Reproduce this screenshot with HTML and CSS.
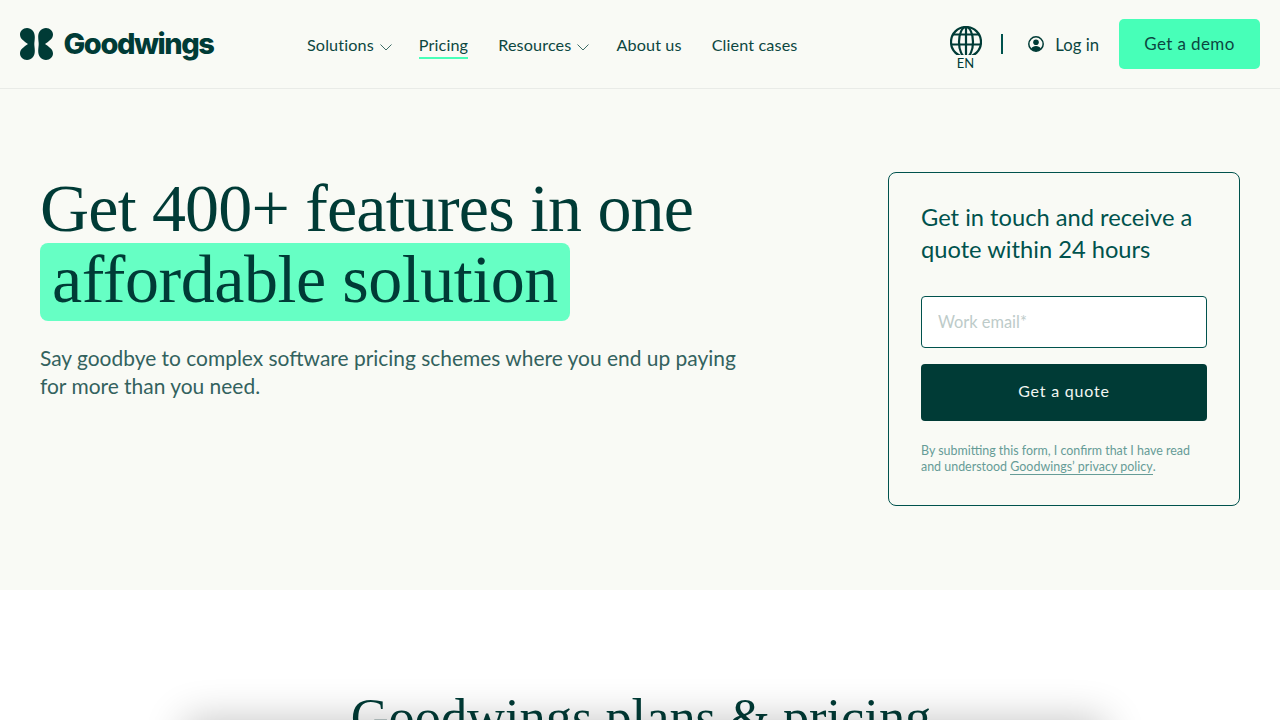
FILE: index.html
```html
<!DOCTYPE html>
<html lang="en">
<head>
<meta charset="utf-8">
<title>Goodwings pricing</title>
<link rel="stylesheet" href="styles.css">
</head>
<body>
<header class="site-header">
  <a class="brand" href="#">
    <svg class="brand-mark" viewBox="0 0 33 32" width="33" height="32" aria-hidden="true">
      <path d="M7 0C11.500 0 14.800 3.500 14.800 9C14.800 12 14.300 14 14.300 16C14.300 18 14.800 20 14.800 23C14.800 28.500 11.500 32 7 32C3 32 0 29 0 25.500C0 21 4 19 8 16C4 13 0 11 0 6.500C0 3 3 0 7 0Z"/>
      <path d="M26 0C21.500 0 18.200 3.500 18.200 9C18.200 12 18.700 14 18.700 16C18.700 18 18.200 20 18.200 23C18.200 28.500 21.500 32 26 32C30 32 33 29 33 25.500C33 21 29 19 25 16C29 13 33 11 33 6.500C33 3 30 0 26 0Z"/>
    </svg>
    <span class="brand-name">Goodwings</span>
  </a>
  <nav class="main-nav">
    <a class="nav-link" href="#">Solutions<svg class="chev" viewBox="0 0 12 7" width="12" height="7"><path d="M.5.500 6 6 11.500.500"/></svg></a>
    <a class="nav-link nav-current" href="#">Pricing</a>
    <a class="nav-link" href="#">Resources<svg class="chev" viewBox="0 0 12 7" width="12" height="7"><path d="M.5.500 6 6 11.500.500"/></svg></a>
    <a class="nav-link" href="#">About us</a>
    <a class="nav-link" href="#">Client cases</a>
  </nav>
  <div class="header-actions">
    <div class="lang">
      <svg class="globe" viewBox="0 0 32 29" width="32" height="29" aria-hidden="true">
        <circle cx="16" cy="16" r="15"/>
        <ellipse cx="16" cy="16" rx="7" ry="15"/>
        <path d="M16 1V29M3.500 8.500H28.500M1 18.500H31"/>
      </svg>
      <span class="lang-code">EN</span>
    </div>
    <span class="divider"></span>
    <a class="login" href="#">
      <svg class="user" viewBox="0 0 16 16" width="16" height="16" aria-hidden="true">
        <circle class="user-ring" cx="8" cy="8" r="7.200"/>
        <circle class="user-fill" cx="8" cy="6.200" r="2.800"/>
        <path class="user-fill" d="M3 12.800C4 10.800 6 10 8 10C10 10 12 10.800 13 12.800C11.500 14.400 9.800 15.200 8 15.200C6.200 15.200 4.500 14.400 3 12.800Z"/>
      </svg>
      <span>Log in</span>
    </a>
    <a class="demo-btn" href="#">Get a demo</a>
  </div>
</header>
<section class="hero">
  <div class="hero-copy">
    <h1 class="hero-title"><span class="title-line">Get 400+ features in one</span> <span class="mark">affordable solution</span></h1>
    <p class="hero-sub">Say goodbye to complex software pricing schemes where you end up paying for more than you need.</p>
  </div>
  <form class="quote-card">
    <h2 class="quote-title">Get in touch and receive a quote within 24 hours</h2>
    <input class="email" type="text" placeholder="Work email*">
    <button class="quote-btn" type="button">Get a quote</button>
    <p class="legal">By submitting this form, I confirm that I have read and understood <a href="#">Goodwings’ privacy policy</a>.</p>
  </form>
</section>
<section class="plans">
  <h2 class="plans-title">Goodwings plans &amp; pricing</h2>
  <div class="plans-table"></div>
</section>
</body>
</html>
```
FILE: styles.css
```css
* { box-sizing: border-box; }
html, body { margin: 0; height: 720px; overflow: hidden; background: #fff; }
body { font-family: "Lato", "Open Sans", sans-serif; color: #003b36; }
a { color: inherit; text-decoration: none; }

.site-header {
  height: 89px;
  display: flex;
  align-items: center;
  background: #f9faf5;
  border-bottom: 1px solid #e9ebe7;
  padding: 0 20px;
}
.brand { display: flex; align-items: center; gap: 10.500px; width: 287px; flex: none; }
.brand-mark { fill: #003b36; flex: none; }
.brand-name { font-family: "Inter", "Lato", sans-serif; font-size: 29px; font-weight: 800; letter-spacing: -1.450px; line-height: 32px; }

.main-nav { display: flex; gap: 30px; font-size: 16.200px; line-height: 24px; padding-top: 2px; }
.nav-link { display: flex; align-items: center; color: #0c4741; letter-spacing: .13px; }
.nav-current { box-shadow: 0 2px 0 #47ffb8; height: 24px; }
.chev { margin: 4px -3px 0 6px; fill: none; stroke: #0c4741; stroke-width: .8; }

.header-actions { margin-left: auto; display: flex; align-items: center; }
.lang { display: flex; flex-direction: column; align-items: center; width: 32px; margin-top: 8px; }
.globe { fill: none; stroke: #003b36; stroke-width: 2.200; }
.lang-code { font-size: 13px; line-height: 14px; margin: 1px 2px 0 0; }
.divider { width: 2px; height: 20px; background: #00524d; margin: 0 25px 1px 19px; }
.login { display: flex; align-items: center; gap: 11px; font-size: 16.700px; margin-right: 20px; padding-top: 2px; color: #0c4741; }
.user { flex: none; margin-top: -3px; }
.user-ring { fill: none; stroke: #003b36; stroke-width: 1.500; }
.user-fill { fill: #003b36; }
.demo-btn {
  width: 141px;
  height: 50px;
  display: flex;
  align-items: center;
  justify-content: center;
  background: #47ffb8;
  border-radius: 5px;
  font-size: 17px;
  letter-spacing: .4px;
  padding-bottom: 2px;
  color: #0c4741;
}

.hero {
  height: 501px;
  background: #f9faf5;
  padding: 83px 40px 0;
  display: flex;
  justify-content: space-between;
  align-items: flex-start;
}
.hero-copy { width: 720px; }
.hero-title {
  margin: 0;
  font-family: "Liberation Serif", serif;
  font-weight: 400;
  font-size: 68px;
  line-height: 71px;
  letter-spacing: -.45px;
  color: #003b36;
}
.title-line { display: block; letter-spacing: -.82px; padding-top: 1px; margin-bottom: -1px; }
.mark {
  display: inline-block;
  background: #66ffc4;
  border-radius: 8px;
  padding: 1px 12px 6px 12px;
  height: 78px;
}
.hero-sub {
  margin: 23px 0 0;
  font-size: 20.950px;
  line-height: 28px;
  color: #33625e;
}

.quote-card {
  width: 352px;
  height: 334px;
  border: 1px solid #00524d;
  border-radius: 8px;
  padding: 28px 32px 0;
  display: flex;
  flex-direction: column;
}
.quote-title {
  margin: 0;
  font-weight: 400;
  font-size: 23.700px;
  line-height: 32px;
  color: #00524d;
}
.email {
  height: 52px;
  margin-top: 31px;
  border: 1px solid #00524d;
  border-radius: 4px;
  background: #fff;
  padding: 0 16px 2px;
  font: inherit;
  font-size: 16.400px;
  outline: none;
}
.email::placeholder { color: #bdcbc9; opacity: 1; }
.quote-btn {
  height: 57px;
  margin-top: 16px;
  border: 0;
  border-radius: 4px;
  background: #003b36;
  color: #f2f6f3;
  font: inherit;
  font-size: 16px;
  letter-spacing: .8px;
  padding-bottom: 6px;
}
.legal {
  margin: 22px 0 0;
  font-size: 12.450px;
  line-height: 16px;
  color: #669c97;
}
.legal a { border-bottom: 1px solid #669c97; letter-spacing: .03px; }

.plans { position: relative; height: 130px; background: #fff; overflow: hidden; }
.plans-title {
  margin: 0;
  padding: 97px 0 0 2px;
  text-align: center;
  font-family: "Liberation Serif", serif;
  font-weight: 400;
  font-size: 52.400px;
  line-height: 60px;
  color: #003b36;
}
.plans-table {
  position: absolute;
  left: 185px;
  right: 175px;
  top: 130px;
  height: 60px;
  box-shadow: 0 0 40px rgba(0, 0, 0, .24);
}
```
